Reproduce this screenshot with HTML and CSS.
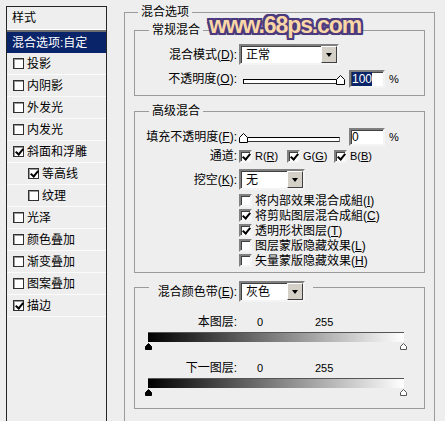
FILE: index.html
```html
<!DOCTYPE html>
<html lang="zh-CN">
<head>
<meta charset="utf-8">
<title>图层样式</title>
<link rel="stylesheet" href="styles.css">
</head>
<body>
<div class="dialog">
  <div class="side">
    <div class="side-head">样式</div>
    <div class="item sel">混合选项:自定</div>
    <div class="item"><span class="scb"></span>投影</div>
    <div class="item"><span class="scb"></span>内阴影</div>
    <div class="item"><span class="scb"></span>外发光</div>
    <div class="item"><span class="scb"></span>内发光</div>
    <div class="item"><span class="scb on"></span>斜面和浮雕</div>
    <div class="item sub"><span class="scb on"></span>等高线</div>
    <div class="item sub"><span class="scb"></span>纹理</div>
    <div class="item"><span class="scb"></span>光泽</div>
    <div class="item"><span class="scb"></span>颜色叠加</div>
    <div class="item"><span class="scb"></span>渐变叠加</div>
    <div class="item"><span class="scb"></span>图案叠加</div>
    <div class="item"><span class="scb on"></span>描边</div>
  </div>

  <div class="main">
    <fieldset class="grp outer">
      <legend>混合选项</legend>

      <fieldset class="grp general">
        <legend>常规混合</legend>
        <div class="row r-select">
          <span class="lbl">混合模式(<u>D</u>):</span>
          <div class="select w100"><span class="val">正常</span><span class="btn"><i class="arrow"></i></span></div>
        </div>
        <div class="row r-num gap5">
          <span class="lbl">不透明度(<u>O</u>):</span>
          <div class="slider">
            <div class="track"></div>
            <svg class="thumb at-right" width="9" height="10" viewBox="0 0 9 10"><polygon points="4.5,0.5 8.5,4.5 8.5,9.5 0.5,9.5 0.5,4.5" fill="#fff" stroke="#000" stroke-width="1"/></svg>
          </div>
          <div class="input"><span class="hl">100</span></div>
          <span class="pct">%</span>
        </div>
      </fieldset>

      <fieldset class="grp adv">
        <legend>高级混合</legend>
        <div class="row r-num fill">
          <span class="lbl">填充不透明度(<u>F</u>):</span>
          <div class="slider">
            <div class="track"></div>
            <svg class="thumb at-left" width="9" height="10" viewBox="0 0 9 10"><polygon points="4.5,0.5 8.5,4.5 8.5,9.5 0.5,9.5 0.5,4.5" fill="#fff" stroke="#000" stroke-width="1"/></svg>
          </div>
          <div class="input">0</div>
          <span class="pct">%</span>
        </div>
        <div class="row r-line chan">
          <span class="lbl">通道:</span>
          <div class="opts">
            <span class="opt"><span class="cb on"></span>R(<u>R</u>)</span>
            <span class="opt"><span class="cb on"></span>G(<u>G</u>)</span>
            <span class="opt"><span class="cb on"></span>B(<u>B</u>)</span>
          </div>
        </div>
        <div class="row r-select knock">
          <span class="lbl">挖空(<u>K</u>):</span>
          <div class="select w66"><span class="val">无</span><span class="btn"><i class="arrow"></i></span></div>
        </div>
        <div class="clist">
          <div class="ci"><span class="cb"></span>将内部效果混合成組(<u>I</u>)</div>
          <div class="ci"><span class="cb on"></span>将剪贴图层混合成組(<u>C</u>)</div>
          <div class="ci"><span class="cb on"></span>透明形状图层(<u>T</u>)</div>
          <div class="ci"><span class="cb"></span>图层蒙版隐藏效果(<u>L</u>)</div>
          <div class="ci"><span class="cb"></span>矢量蒙版隐藏效果(<u>H</u>)</div>
        </div>
      </fieldset>

      <fieldset class="grp band">
        <legend>
          <span class="lg">
            <span class="lg-lbl">混合颜色带(<u>E</u>):</span>
            <span class="select w66"><span class="val">灰色</span><span class="btn"><i class="arrow"></i></span></span>
          </span>
        </legend>
        <div class="row r-line">
          <span class="lbl">本图层:</span>
          <span class="n0">0</span><span class="n1">255</span>
        </div>
        <div class="bar"></div>
        <div class="tris">
          <svg width="7" height="7" viewBox="0 0 7 7"><polygon points="3.5,0.5 6.5,3.5 6.5,6.5 0.5,6.5 0.5,3.5" fill="#000" stroke="#000"/></svg>
          <svg width="7" height="7" viewBox="0 0 7 7"><polygon points="3.5,0.5 6.5,3.5 6.5,6.5 0.5,6.5 0.5,3.5" fill="#fff" stroke="#555"/></svg>
        </div>
        <div class="row r-line next">
          <span class="lbl">下一图层:</span>
          <span class="n0">0</span><span class="n1">255</span>
        </div>
        <div class="bar"></div>
        <div class="tris">
          <svg width="7" height="7" viewBox="0 0 7 7"><polygon points="3.5,0.5 6.5,3.5 6.5,6.5 0.5,6.5 0.5,3.5" fill="#000" stroke="#000"/></svg>
          <svg width="7" height="7" viewBox="0 0 7 7"><polygon points="3.5,0.5 6.5,3.5 6.5,6.5 0.5,6.5 0.5,3.5" fill="#fff" stroke="#555"/></svg>
        </div>
      </fieldset>
    </fieldset>
  </div>

  <div class="wm">www.68ps.com</div>
</div>
</body>
</html>
```

FILE: styles.css
```css
* { box-sizing: border-box; }

html, body {
  margin: 0;
  padding: 0;
  overflow: hidden;
  background: #eeeeee;
}

body {
  font: 12px/14px "Liberation Sans", "Noto Sans CJK SC", sans-serif;
  color: #000;
}

u { text-decoration: underline; text-underline-offset: 1px; }

.dialog {
  position: relative;
  display: flex;
  align-items: flex-start;
  width: 445px;
  height: 421px;
  overflow: hidden;
}

/* ---------- left style list ---------- */
.side {
  flex: none;
  margin: 6px 0 0 6px;
  width: 101px;
  height: 440px;
  border: 1px solid #262626;
  border-bottom: 0;
  background: #eeeeee;
}

.side-head {
  height: 25px;
  padding: 4px 0 0 5px;
  border-bottom: 2px solid #6e6e6e;
  box-shadow: inset 0 -1px 0 #ffffff;
}

.item {
  display: flex;
  align-items: center;
  height: 22px;
  padding-left: 6px;
  border-bottom: 1px solid #fbfbfb;
  white-space: nowrap;
}

.item.sel {
  height: 21px;
  padding-left: 5px;
  border-bottom: 0;
  background: #0a246a;
  color: #ffffff;
}

.item.sub { padding-left: 21px; }

.scb {
  position: relative;
  flex: none;
  width: 11px;
  height: 11px;
  margin-right: 3px;
  background: #ffffff;
  border: 1px solid #303030;
  box-shadow: inset 1px 1px 0 #9a9a9a;
}

.scb.on::after,
.cb.on::after {
  content: "";
  position: absolute;
  width: 3px;
  height: 6px;
  border: solid #000;
  border-width: 0 2px 2px 0;
  transform: rotate(40deg);
}

.scb.on::after { left: 3px; top: 0; }

/* ---------- right panel ---------- */
.main {
  flex: none;
  width: 311px;
  margin: 5px 0 0 17px;
}

.grp {
  margin: 0;
  padding: 0;
  min-width: 0;
  border: 1px solid #9a9a9a;
}

.grp > legend {
  padding: 0 3px;
  margin-left: 14px;
  line-height: 14px;
  white-space: nowrap;
}

.outer {
  height: 440px;
  padding: 4px 9px 0;
}

.outer > legend { margin-left: 4px; }

.general { padding: 7px 0 7px; }
.adv { margin-top: 8px; padding: 0 0 4px; }
.band { margin-top: 8px; padding: 22px 0 12px; }

.row {
  display: flex;
  align-items: center;
  white-space: nowrap;
}

.r-select { height: 21px; }
.r-num { height: 18px; }
.r-line { height: 14px; }
.gap5 { margin-top: 5px; }
.fill { margin-top: 10px; }
.chan { margin-top: 3px; }
.knock { margin-top: 6px; }

.lbl {
  flex: none;
  width: 102px;
  text-align: right;
}

/* select */
.select {
  display: flex;
  flex: none;
  height: 21px;
  margin-left: 2px;
  background: #ffffff;
  border: 2px solid;
  border-color: #808080 #f4f4f4 #f4f4f4 #808080;
  box-shadow: inset 1px 1px 0 #404040;
}

.w100 { width: 100px; }
.w66 { width: 66px; }

.select .val {
  flex: 1;
  padding: 1px 0 0 5px;
  line-height: 16px;
  font-size: 12px;
}

.select .btn {
  display: flex;
  align-items: center;
  justify-content: center;
  flex: none;
  width: 16px;
  height: 17px;
  background: #d4d0c8;
  border: 1px solid;
  border-color: #ffffff #404040 #404040 #ffffff;
}

.arrow {
  width: 0;
  height: 0;
  border-top: 4px solid #000;
  border-left: 3.5px solid transparent;
  border-right: 3.5px solid transparent;
}

/* slider */
.slider {
  position: relative;
  flex: none;
  display: flex;
  align-items: center;
  width: 97px;
  height: 18px;
  margin-left: 6px;
}

.track {
  width: 100%;
  height: 5px;
  margin-top: 5px;
  background: #ffffff;
  border: 1px solid #000;
  border-right-color: #7a7a7a;
  border-bottom-color: #333;
}

.thumb {
  position: absolute;
  top: 5px;
}

.thumb.at-right { right: -5px; }
.thumb.at-left { left: -4px; }

/* text input */
.input {
  flex: none;
  width: 36px;
  height: 18px;
  margin-left: 9px;
  padding: 1px 0 0 1px;
  background: #ffffff;
  border: 2px solid;
  border-color: #808080 #f4f4f4 #f4f4f4 #808080;
  box-shadow: inset 1px 1px 0 #404040;
  line-height: 13px;
}

.hl {
  background: #0a246a;
  color: #ffffff;
}

.pct { margin-left: 4px; font-size: 11px; }

/* checkboxes */
.cb {
  position: relative;
  flex: none;
  width: 13px;
  height: 13px;
  background: #ffffff;
  border: 2px solid;
  border-color: #808080 #f4f4f4 #f4f4f4 #808080;
  box-shadow: inset 1px 1px 0 #404040;
}

.cb.on::after { left: 3px; top: 0; }

.opts {
  display: flex;
  align-items: center;
  margin-left: 2px;
}

.opt {
  display: flex;
  align-items: center;
  width: 48px;
  font-size: 11px;
}

.opt:nth-child(2) { width: 47px; }
.opt .cb { margin-right: 3px; }

.clist { margin: 3px 0 0 104px; }

.ci {
  display: flex;
  align-items: center;
  height: 15px;
  white-space: nowrap;
}

.ci .cb { margin-right: 3px; }

/* blend band */
.band > legend {
  height: 12px;
  padding: 0 8px 0 3px;
  margin-left: 14px;
}

.lg {
  display: flex;
  align-items: center;
  height: 21px;
}

.lg-lbl {
  width: 85px;
  text-align: right;
}

.n0 { margin-left: 20px; width: 58px; font-size: 11px; }
.n1 { font-size: 11px; }

.bar {
  width: 256px;
  height: 10px;
  margin: 3px 0 0 13px;
  background: linear-gradient(to right, #000000, #ffffff);
  border-top: 1px solid #555;
}

.tris {
  display: flex;
  justify-content: space-between;
  align-items: flex-end;
  width: 262px;
  height: 8px;
  margin-left: 10px;
}

.next { margin-top: 11px; }

/* watermark overlay */
.wm {
  position: absolute;
  left: 209px;
  top: 14px;
  font: bold 23px/23px "Liberation Sans", sans-serif;
  letter-spacing: -1.1px;
  color: #fad7a6;
  text-shadow:
    2px 0 0 #4b3a7e, -2px 0 0 #4b3a7e, 0 2px 0 #4b3a7e, 0 -2px 0 #4b3a7e,
    2px 2px 0 #4b3a7e, -2px -2px 0 #4b3a7e, 2px -2px 0 #4b3a7e, -2px 2px 0 #4b3a7e,
    1px 2px 0 #4b3a7e, 2px 1px 0 #4b3a7e, -1px -2px 0 #4b3a7e, -2px -1px 0 #4b3a7e,
    0 0 3px #4b3a7e;
}
```
